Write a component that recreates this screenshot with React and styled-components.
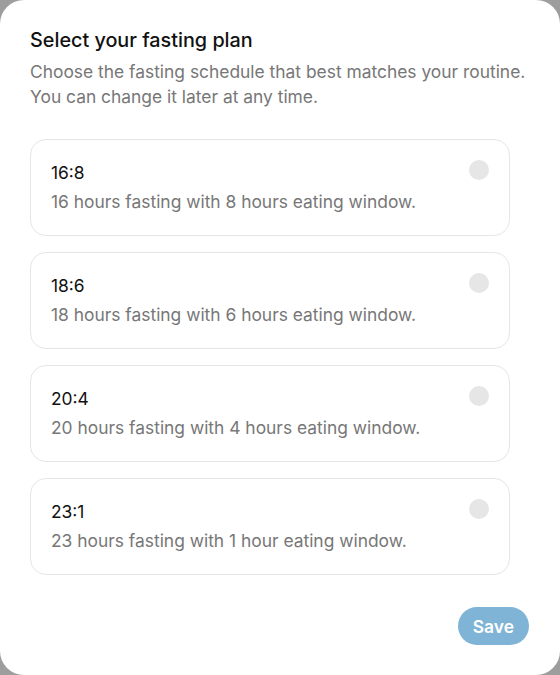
import React, { useState } from "react";
import styled, { createGlobalStyle } from "styled-components";

const GlobalStyle = createGlobalStyle`
  html, body {
    margin: 0;
    padding: 0;
    background: #9d9d9d;
  }
  body {
    font-family: Inter, "Noto Sans", sans-serif;
    -webkit-font-smoothing: antialiased;
  }
`;

const plans = [
  { id: "16:8", text: "16 hours fasting with 8 hours eating window." },
  { id: "18:6", text: "18 hours fasting with 6 hours eating window." },
  { id: "20:4", text: "20 hours fasting with 4 hours eating window." },
  { id: "23:1", text: "23 hours fasting with 1 hour eating window." },
];

function App() {
  const [selected, setSelected] = useState(null);

  return (
    <>
      <GlobalStyle />
      <Modal>
        <Title>Select your fasting plan</Title>
        <Subtitle>
          Choose the fasting schedule that best matches your routine.
          <br />
          You can change it later at any time.
        </Subtitle>

        <PlanList>
          {plans.map((plan) => (
            <PlanCard
              key={plan.id}
              $active={selected === plan.id}
              onClick={() => setSelected(plan.id)}
            >
              <PlanText>
                <PlanName>{plan.id}</PlanName>
                <PlanDesc>{plan.text}</PlanDesc>
              </PlanText>
              <Radio $active={selected === plan.id} />
            </PlanCard>
          ))}
        </PlanList>

        <Footer>
          <SaveButton disabled={!selected}>Save</SaveButton>
        </Footer>
      </Modal>
    </>
  );
}

const Modal = styled.div`
  box-sizing: border-box;
  width: 560px;
  height: 675px;
  background: #fff;
  border-radius: 24px;
  padding: 27px 30px 30px 30px;
  display: flex;
  flex-direction: column;
`;

const Title = styled.h2`
  margin: 0;
  font-size: 19.8px;
  font-weight: 500;
  line-height: 26px;
  color: #111;
`;

const Subtitle = styled.p`
  margin: 6px 0 0;
  font-size: 17.4px;
  line-height: 25px;
  color: #777;
`;

const PlanList = styled.div`
  margin-top: 30px;
  display: flex;
  flex-direction: column;
  gap: 16px;
`;

const PlanCard = styled.div`
  box-sizing: border-box;
  width: 480px;
  height: 97px;
  border: 1px solid ${(p) => (p.$active ? "#7fb4d6" : "#e6e6e6")};
  border-radius: 16px;
  padding: 20px 20px 0 20px;
  display: flex;
  justify-content: space-between;
  align-items: flex-start;
  cursor: pointer;
`;

const PlanText = styled.div`
  padding-top: 1px;
  display: flex;
  flex-direction: column;
  gap: 5px;
`;

const PlanName = styled.div`
  font-size: 17.4px;
  line-height: 24px;
  color: #111;
`;

const PlanDesc = styled.div`
  font-size: 17.4px;
  line-height: 24px;
  color: #777;
`;

const Radio = styled.span`
  width: 20px;
  height: 20px;
  border-radius: 50%;
  background: ${(p) => (p.$active ? "#7fb4d6" : "#e6e6e6")};
  flex-shrink: 0;
`;

const Footer = styled.div`
  margin-top: auto;
  display: flex;
  justify-content: flex-end;
`;

const SaveButton = styled.button`
  height: 38px;
  padding: 0 15px;
  margin-right: 1px;
  border: none;
  border-radius: 19px;
  background: #7fb4d6;
  color: #fff;
  font-family: Inter, "Noto Sans", sans-serif;
  font-size: 17.4px;
  font-weight: 600;
  cursor: pointer;
`;

export default App;
